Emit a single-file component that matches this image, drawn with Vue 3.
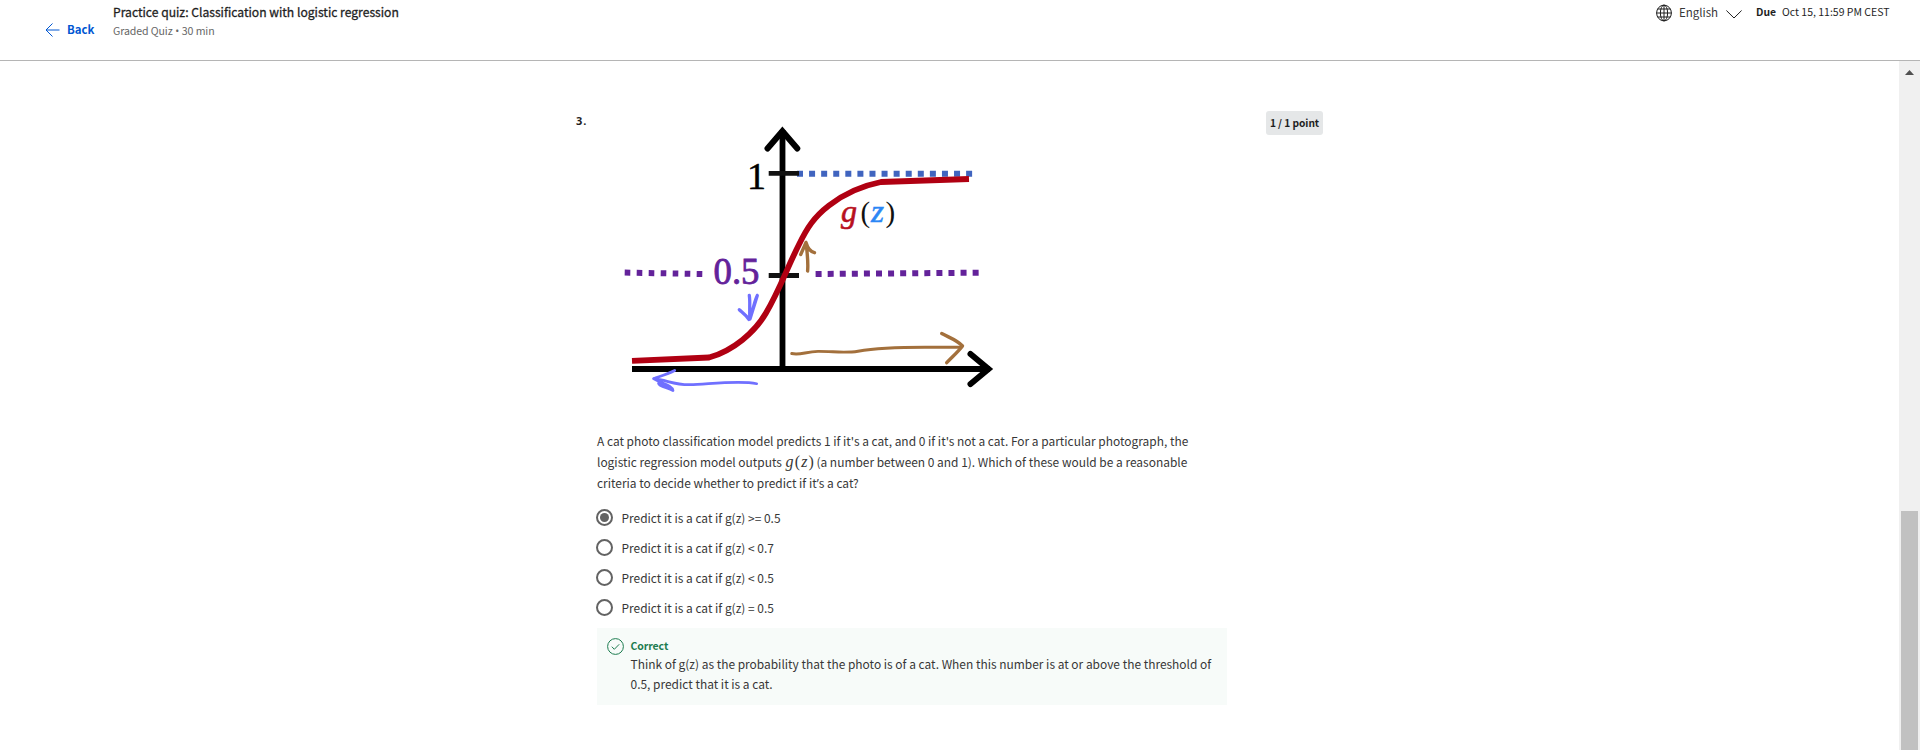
<script setup>
const answers = [
  { text: 'Predict it is a cat if g(z) >= 0.5', checked: true },
  { text: 'Predict it is a cat if g(z) < 0.7', checked: false },
  { text: 'Predict it is a cat if g(z) < 0.5', checked: false },
  { text: 'Predict it is a cat if g(z) = 0.5', checked: false },
]
</script>

<template>
  <div class="page">
    <header class="topbar">
      <a class="back">
        <svg width="15" height="14" viewBox="0 0 15 14" fill="none" stroke="#0056d2" stroke-width="1"><path d="M14.5 7H1M7.5 .5L1 7l6.5 6.5" /></svg>
        <span>Back</span>
      </a>
      <div class="heading">
        <div class="title"><span>Practice quiz: Classification with logistic regression</span></div>
        <div class="subtitle"><span>Graded Quiz<span class="punct"> • </span>30 min</span></div>
      </div>
      <div class="meta">
        <svg class="globe" width="16" height="18" viewBox="0 0 16 18" fill="none" stroke="#1f1f1f" stroke-width="1">
          <ellipse cx="8" cy="9" rx="7.4" ry="7.9" /><ellipse cx="8" cy="9" rx="3.6" ry="7.9" />
          <path d="M8 1v16M.5 9h15M1.6 5h12.8M1.6 13h12.8" />
        </svg>
        <span class="lang">English</span>
        <svg class="chev" width="16" height="9" viewBox="0 0 16 9" fill="none" stroke="#1f1f1f"><path d="M.4 .5L8 8l7.6-7.5" /></svg>
        <b class="due">Due</b>
        <span class="date">Oct 15, 11:59 PM CEST</span>
      </div>
    </header>

    <div class="body">
      <main class="content">
        <div class="number">3.</div>
        <section class="question">
          <svg class="chart" width="420" height="290" viewBox="597 115 420 290" fill="none">
            <g stroke="#000" stroke-width="6">
              <path d="M782.5 130V369M632 369H990" stroke-width="5.8" />
              <path d="M767.5 148.5L782.4 131.2L797.3 148.5M970.5 354L988.500 369L970.5 384" stroke-linecap="round" />
            </g>
            <path d="M797 173.8H972.4" stroke="#4064bf" stroke-width="6" stroke-dasharray="6 6.08" />
            <path d="M624.7 272.6L702.5 274" stroke="#63229a" stroke-width="6" stroke-dasharray="5.6 6.4" />
            <path d="M815.6 274L979 272.7" stroke="#63229a" stroke-width="6" stroke-dasharray="6 6.08" />
            <path d="M768.7 173.4H799M768.7 275.5H799" stroke="#111" stroke-width="4.8" />
            <path d="M632 360.9L709 357.5C733 351 755 332 766 313C780 289 787 268 799 244.500C807 228 814 217 829 205.500C845 193 861 186 881 182L969 179" stroke="#b00012" stroke-width="5.8" />
            <g stroke="#a3703c" stroke-width="3.4" stroke-linecap="round" stroke-linejoin="round">
              <path d="M807.600 271C808.500 261 807 252 806 242.500L800.700 254.500M806 242.500C808 249 811 252 814.500 252.700" />
              <path stroke-width="2.900" d="M791.700 353.500C800 355.500 806 351.500 818 351.400C833 351.300 845 353.300 858 351.200C882 347 910 347 937 347.300L961 347.300" />
              <path d="M941.700 333.500C949 337.500 957 340 962.500 346C958 352 951 358 946.700 362.700" />
            </g>
            <g stroke="#7070ff" stroke-width="3.300" stroke-linecap="round" stroke-linejoin="round">
              <path d="M749.300 295.500C750.500 303 749 310 750 319L757.300 295.500M739.300 309.700C743 313 746 315 749 319.500C753 312 754 302 757.300 295.500" />
              <path stroke-width="2.700" d="M756.700 383.700C740 380 710 384 690 384.700C674 385 667 380 653.500 378.700C661 376 668 374 674.700 370.500M653.500 378.700C662 384 672 385 673 390.500C668 387.500 659 387 658.500 383.300C664 383 671 386.500 673 390.500" />
            </g>
            <g font-family="'Liberation Serif', serif">
              <text x="747" y="188.500" font-size="38" fill="#000" stroke="#000" stroke-width=".5">1</text>
              <text x="713.500" y="284" font-size="37" fill="#63229a" stroke="#63229a" stroke-width=".8" textLength="46" lengthAdjust="spacingAndGlyphs">0.5</text>
              <g font-size="32">
                <text x="841" y="222" font-style="italic" fill="#b80f20" stroke="#b80f20" stroke-width=".6">g</text>
                <text x="860.500" y="221.500" font-size="29" fill="#111">(</text>
                <text x="871" y="221.500" font-style="italic" fill="#2b87f5" stroke="#2b87f5" stroke-width=".5" textLength="13" lengthAdjust="spacingAndGlyphs">z</text>
                <text x="885.500" y="221.500" font-size="29" fill="#111">)</text>
              </g>
            </g>
          </svg>

          <div class="prompt">
            <div><span>A cat photo classification model predicts 1 if it's a cat, and 0 if it's not a cat. For a particular photograph, the</span></div>
            <div class="mixed"><span>logistic regression model outputs</span><span class="math"><i>g</i>(<i>z</i>)</span><span>(a number between 0 and 1). Which of these would be a reasonable</span></div>
            <div><span>criteria to decide whether to predict if it<span class="punct">’</span>s a cat?</span></div>
          </div>

          <div class="answers">
            <label v-for="a in answers" :key="a.text" class="answer">
              <span class="radio" :class="{ on: a.checked }"></span>
              <span>{{ a.text }}</span>
            </label>
          </div>

          <div class="feedback">
            <svg width="17" height="17" viewBox="0 0 17 17" fill="none" stroke="#1d7c50"><circle cx="8.500" cy="8.500" r="7.900" /><path d="M4.800 8.700l2.500 2.600 4.900-5" /></svg>
            <div class="ftext">
              <div class="correct"><span>Correct</span></div>
              <div><span>Think of g(z) as the probability that the photo is of a cat. When this number is at or above the threshold of</span></div>
              <div><span>0.5, predict that it is a cat.</span></div>
            </div>
          </div>
        </section>
        <div class="points"><span>1 / 1 point</span></div>
      </main>
      <aside class="scrollbar">
        <svg width="9" height="5" viewBox="0 0 9 5"><path d="M4.500 0L9 5H0z" fill="#505050" /></svg>
        <div class="thumb"></div>
      </aside>
    </div>
  </div>
</template>

<style>
body { margin: 0; overflow: hidden; background: #fff; }
</style>

<style scoped>
.page { width: 1920px; height: 750px; display: flex; flex-direction: column; overflow: hidden; font-family: "Noto Sans CJK SC", sans-serif; font-size: 11.94px; color: #373737; white-space: nowrap; box-sizing: border-box; }
.topbar { height: 60px; flex: none; display: flex; align-items: flex-start; border-bottom: 1px solid #b5b5b5; box-sizing: content-box; }
.back { display: flex; align-items: center; gap: 7px; margin: 20px 0 0 45px; width: 68px; height: 20px; color: #0056d2; font-weight: 700; font-size: 11.4px; line-height: 20px; }
.back span { margin-top: -2px; }
.title { margin-top: 2px; height: 20px; line-height: 20px; color: #1f1f1f; font-weight: 400; font-size: 12.14px; -webkit-text-stroke: .3px #1f1f1f; }
.subtitle { height: 18px; line-height: 18px; color: #666; font-size: 10.6px; letter-spacing: -.1px; }
.punct { font-family: "Open Sans", sans-serif; line-height: 1; }
.meta { margin: 2px 31px 0 auto; display: flex; align-items: center; height: 21px; line-height: 20px; }
.globe { margin-right: 7px; }
.lang { width: 47px; font-size: 11.5px; margin-top: -1px; }
.chev { margin-top: 4px; margin-right: 14px; }
.due { font-size: 10.4px; color: #1f1f1f; width: 26px; margin-top: -2px; }
.date { font-size: 10.5px; width: 107px; color: #1f1f1f; margin-top: -2px; }
.body { flex: 1; display: flex; min-height: 0; }
.content { flex: 1; display: flex; align-items: flex-start; padding-left: 576px; }
.number { width: 21px; margin-top: 50px; font: 700 11px/20px "Noto Sans", sans-serif; letter-spacing: 1px; color: #1f1f1f; }
.question { width: 630px; padding-top: 54px; }
.chart { display: block; }
.prompt { margin-top: 25px; line-height: 21px; }
.prompt > div { height: 21px; }
.mixed { display: flex; }
.math { font: 16px/21px "Liberation Serif", serif; letter-spacing: 1.2px; width: 28px; margin: 0 3px 0 3.5px; }
.answers { margin-top: 9px; }
.answer { height: 30px; display: flex; align-items: center; gap: 8.5px; }
.radio { width: 17px; height: 17px; box-sizing: border-box; border: 2px solid #636363; border-radius: 50%; display: flex; align-items: center; justify-content: center; margin-left: -1px; }
.radio.on::after { content: ""; width: 9px; height: 9px; border-radius: 50%; background: #636363; }
.feedback { margin-top: 6px; height: 77px; background: #f7fbf9; display: flex; padding: 10px 0 0 10px; box-sizing: border-box; gap: 6.5px; }
.feedback svg { flex: none; }
.ftext { line-height: 20px; margin-top: -2px; }
.ftext > div { height: 20px; }
.ftext .correct { height: 18px; line-height: 20px; font-weight: 700; color: #1d7c50; font-size: 10.5px; letter-spacing: -.1px; }
.points { margin: 50px 0 0 39px; width: 57px; height: 24px; line-height: 24px; border-radius: 3px; background: #e5e7e8; text-align: center; font-weight: 700; font-size: 10.2px; letter-spacing: -.05px; color: #1f1f1f; }
.scrollbar { width: 21px; flex: none; background: #f0f0f0; display: flex; flex-direction: column; align-items: center; }
.scrollbar svg { margin-top: 9px; }
.thumb { margin-top: 436px; width: 17px; flex: 1; background: #c1c1c1; }
</style>
